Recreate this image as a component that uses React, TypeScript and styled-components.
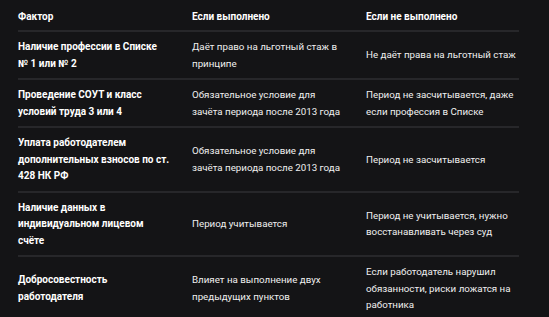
import React from "react";
import styled, { createGlobalStyle } from "styled-components";

const GlobalStyle = createGlobalStyle`
    html, body {
        margin: 0;
        padding: 0;
        background: #141416;
    }
    body {
        font-family: Roboto, "Noto Sans", Arial, sans-serif;
        color: #f2f2f2;
    }
`;

const Page = styled.div`
    padding: 0 30px 0 18px;
    width: 549px;
    box-sizing: border-box;
`;

const Table = styled.div`
    display: grid;
    grid-template-columns: 174px 174px 153px;
    width: 501px;
`;

const Cell = styled.div<{ $last?: boolean }>`
    display: flex;
    align-items: center;
    padding: 7px 0 6px 0;
    padding-right: ${({ $last }) => ($last ? "0" : "19px")};
    border-bottom: 2px solid #27272a;
    font-size: 9.75px;
    line-height: 16.5px;
    font-weight: 400;
    color: #f0f0f0;
`;

const HeadCell = styled(Cell)`
    padding-top: 9px;
    padding-bottom: 5px;
    line-height: 16px;
    font-size: 10px;
    font-weight: 700;
    color: #ffffff;
`;

const FactorCell = styled(Cell)`
    padding-right: 21px;
    font-size: 10px;
    font-weight: 700;
    color: #ffffff;
`;

const rows: [string, string, string][] = [
    ["Наличие профессии в Списке №\u00a01 или №\u00a02", "Даёт право на льготный стаж в принципе", "Не даёт права на льготный стаж"],
    ["Проведение СОУТ и класс условий труда 3 или 4", "Обязательное условие для зачёта периода после 2013 года", "Период не засчитывается, даже если профессия в Списке"],
    ["Уплата работодателем дополнительных взносов по ст. 428 НК РФ", "Обязательное условие для зачёта периода после 2013 года", "Период не засчитывается"],
    ["Наличие данных в индивидуальном лицевом счёте", "Период учитывается", "Период не учитывается, нужно восстанавливать через суд"],
    ["Добросовестность работодателя", "Влияет на выполнение двух предыдущих пунктов", "Если работодатель нарушил обязанности, риски ложатся на работника"],
];

export default function App() {
    return (
        <Page>
            <GlobalStyle />
            <Table>
                <HeadCell>Фактор</HeadCell>
                <HeadCell>Если выполнено</HeadCell>
                <HeadCell $last>Если не выполнено</HeadCell>
                {rows.map(([factor, done, notDone], i) => (
                    <React.Fragment key={i}>
                        <FactorCell>{factor}</FactorCell>
                        <Cell>{done}</Cell>
                        <Cell $last>{notDone}</Cell>
                    </React.Fragment>
                ))}
            </Table>
        </Page>
    );
}
